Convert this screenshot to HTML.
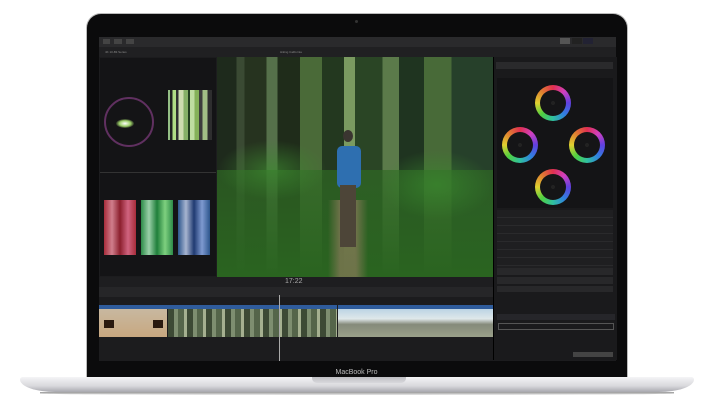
<!DOCTYPE html><html><head><style>
body{margin:0;width:713px;height:409px;background:#fff;position:relative;overflow:hidden;font-family:"Liberation Sans",sans-serif}
.a{position:absolute}
.wh{position:absolute;width:36px;height:36px;border-radius:50%;background:conic-gradient(#e03050,#d040c0,#6040e0,#3080e0,#30c0a0,#50d040,#e0d030,#e08030,#e03050);}
.wh:after{content:"";position:absolute;left:5px;top:5px;width:26px;height:26px;border-radius:50%;background:radial-gradient(#222 0 10%,#151517 12%)}
.t{position:absolute;font-size:3px;color:#888}
</style></head><body>
<div class="a" style="left:87px;top:14px;width:540px;height:366px;background:#0b0b0c;border-radius:14px 14px 0 0;box-shadow:0 0 0 1px #bbb"></div>
<div class="a" style="left:355px;top:20px;width:3px;height:3px;border-radius:50%;background:#333"></div>
<div class="a" style="left:99px;top:37px;width:517px;height:324px;background:#1c1c1e"></div>
<div class="a" style="left:99px;top:37px;width:517px;height:10px;background:#2a2a2c"></div>
<div class="a" style="left:103px;top:39px;width:7px;height:5px;background:#444"></div>
<div class="a" style="left:114px;top:39px;width:8px;height:5px;background:#444"></div>
<div class="a" style="left:126px;top:39px;width:8px;height:5px;background:#444"></div>
<div class="a" style="left:560px;top:38px;width:10px;height:6px;background:#555"></div>
<div class="a" style="left:572px;top:38px;width:10px;height:6px;background:#222"></div>
<div class="a" style="left:583px;top:38px;width:10px;height:6px;background:#223"></div>
<div class="a" style="left:99px;top:47px;width:517px;height:10px;background:#202022"></div>
<div class="t" style="left:105px;top:50px">4K 10-Bit Series</div>
<div class="t" style="left:280px;top:50px">Hiking California</div>
<div class="a" style="left:100px;top:58px;width:116px;height:218px;background:#141416"></div>
<div class="a" style="left:100px;top:172px;width:116px;height:1px;background:#333"></div>
<div class="a" style="left:104px;top:97px;width:50px;height:50px;border-radius:50%;border:2px solid #603060;box-sizing:border-box"></div>
<div class="a" style="left:116px;top:119px;width:18px;height:9px;border-radius:50%;background:radial-gradient(#fff,#9c6 45%,transparent 75%)"></div>
<div class="a" style="left:168px;top:90px;width:44px;height:50px;background:linear-gradient(90deg,#ad9 0 5%,#222 5% 10%,#cf9 10% 18%,#333 18% 24%,#efc 24% 35%,#9c7 35% 45%,#242 45% 50%,#dfb 50% 60%,#9c6 60% 70%,#444 70% 78%,#bd9 78% 90%,#333 90%);opacity:.85"></div>
<div class="a" style="left:104px;top:200px;width:32px;height:55px;background:linear-gradient(90deg,#c34,#f9a,#a23,#f79,#c34);opacity:.8"></div>
<div class="a" style="left:141px;top:200px;width:32px;height:55px;background:linear-gradient(90deg,#3a5,#bfc,#294,#9f9,#3a5);opacity:.8"></div>
<div class="a" style="left:178px;top:200px;width:32px;height:55px;background:linear-gradient(90deg,#36a,#cdf,#248,#9bf,#36a);opacity:.8"></div>
<div class="a" style="left:217px;top:57px;width:276px;height:220px;background:linear-gradient(90deg,#1e2a1c 0 7%,#3a4a33 7% 10%,#26331f 10% 18%,#55704a 18% 22%,#1f2c1a 22% 30%,#4a6a38 30% 38%,#23381f 38% 46%,#7a9a60 46% 50%,#2a4525 50% 60%,#5b7a4a 60% 66%,#1f3420 66% 75%,#486a38 75% 85%,#26402a 85%)"></div>
<div class="a" style="left:217px;top:170px;width:276px;height:107px;background:linear-gradient(#2f6a24aa,#2a6420);"></div>
<div class="a" style="left:217px;top:140px;width:110px;height:60px;background:radial-gradient(#3d8a30aa,transparent 70%)"></div>
<div class="a" style="left:380px;top:150px;width:113px;height:70px;background:radial-gradient(#3a8a2eaa,transparent 70%)"></div>
<div class="a" style="left:328px;top:200px;width:40px;height:77px;background:linear-gradient(90deg,transparent,#8a7a5a 30% 70%,transparent);opacity:.7"></div>
<div class="a" style="left:337px;top:146px;width:24px;height:42px;background:#2e6fb0;border-radius:5px"></div>
<div class="a" style="left:343px;top:130px;width:10px;height:12px;background:#3a3530;border-radius:50%"></div>
<div class="a" style="left:340px;top:185px;width:16px;height:62px;background:#4d4538"></div>
<div class="a" style="left:493px;top:57px;width:123px;height:303px;background:#1a1a1c;border-left:1px solid #000"></div>
<div class="a" style="left:496px;top:62px;width:117px;height:7px;background:#2a2a2c"></div>
<div class="a" style="left:497px;top:78px;width:116px;height:130px;background:#141416"></div>
<div class="wh" style="left:535px;top:85px"></div>
<div class="wh" style="left:502px;top:127px"></div>
<div class="wh" style="left:569px;top:127px"></div>
<div class="wh" style="left:535px;top:169px"></div>
<div class="a" style="left:497px;top:210px;width:116px;height:80px;background:repeating-linear-gradient(#1f1f21 0 7px,#2a2a2c 7px 8px)"></div>
<div class="a" style="left:497px;top:268px;width:116px;height:24px;background:repeating-linear-gradient(#28282a 0 7px,#1a1a1c 7px 9px)"></div>
<div class="a" style="left:497px;top:314px;width:118px;height:6px;background:#26262a"></div>
<div class="a" style="left:498px;top:323px;width:116px;height:7px;border:1px solid #555;box-sizing:border-box"></div>
<div class="a" style="left:573px;top:352px;width:40px;height:5px;background:#444"></div>
<div class="a" style="left:99px;top:277px;width:394px;height:10px;background:#1e1e20"></div>
<div class="a" style="left:285px;top:278px;font-size:7px;color:#aaa">17:22</div>
<div class="a" style="left:99px;top:287px;width:394px;height:10px;background:#262628"></div>
<div class="a" style="left:99px;top:297px;width:394px;height:8px;background:#1c1c1e"></div>
<div class="a" style="left:99px;top:305px;width:69px;height:4px;background:#2f5c9c"></div>
<div class="a" style="left:99px;top:309px;width:68px;height:28px;background:linear-gradient(#c8b8a0,#c8a880)"></div>
<div class="a" style="left:104px;top:320px;width:10px;height:8px;background:#2a1a10"></div>
<div class="a" style="left:153px;top:320px;width:10px;height:8px;background:#2a1a10"></div>
<div class="a" style="left:168px;top:305px;width:169px;height:4px;background:#2f5c9c"></div>
<div class="a" style="left:168px;top:309px;width:169px;height:28px;background:repeating-linear-gradient(90deg,#3d4a35 0 6px,#7e8e70 6px 10px,#55654a 10px 16px,#a5b090 16px 19px)"></div>
<div class="a" style="left:338px;top:305px;width:155px;height:4px;background:#2f5c9c"></div>
<div class="a" style="left:338px;top:309px;width:155px;height:28px;background:linear-gradient(#bcd4e4,#dfe8ea 35%,#858a7a 55%,#9aa08a)"></div>
<div class="a" style="left:279px;top:295px;width:1px;height:66px;background:#aaa"></div>
<div class="a" style="left:20px;top:377px;width:674px;height:15px;background:linear-gradient(#f4f4f6,#d8d8dc 60%,#a8a8ae);border-radius:3px 3px 40px 40px/3px 3px 14px 14px"></div>
<div class="a" style="left:40px;top:392px;width:634px;height:3px;background:linear-gradient(#999,#e8e8e8);border-radius:0 0 50% 50%"></div>
<div class="a" style="left:312px;top:377px;width:94px;height:6px;background:linear-gradient(#bfbfc3,#d8d8dc);border-radius:0 0 5px 5px"></div>
<div class="a" style="left:0;top:369px;width:713px;text-align:center;font-size:7px;color:#bbb">MacBook Pro</div>
</body></html>
